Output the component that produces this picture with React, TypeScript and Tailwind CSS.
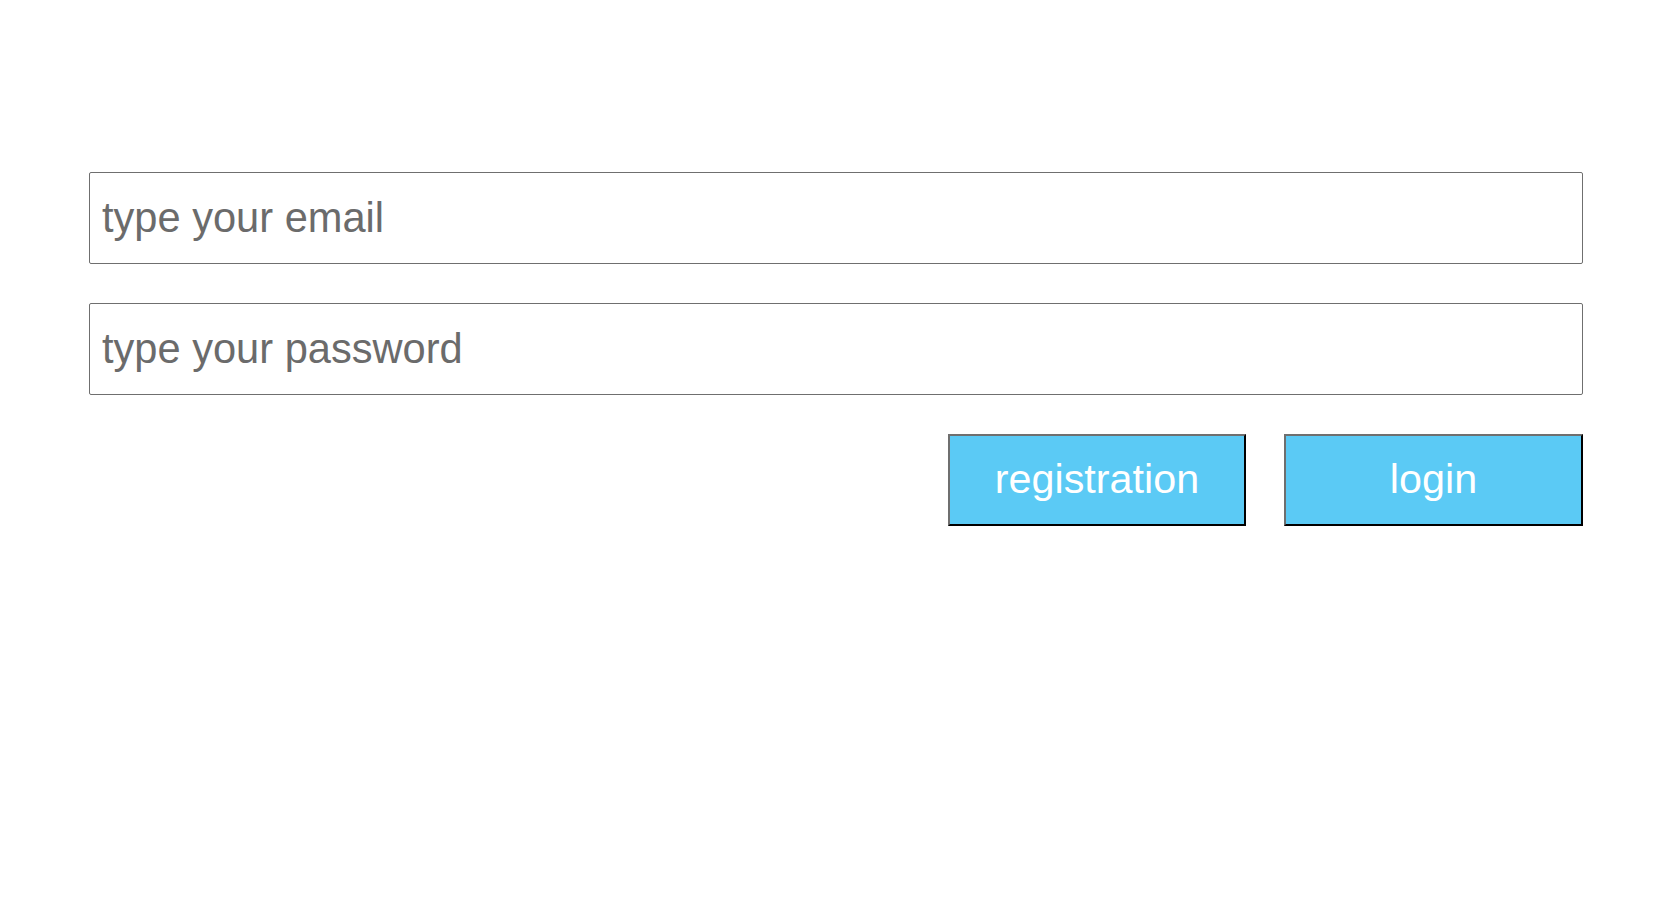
export default function App() {
  const inputCls =
    "box-border h-[92px] w-full rounded-[2px] border border-[#6f6f6f] bg-white px-[12px] font-['Liberation_Sans',Arial,sans-serif] text-[41.6px] text-[#222] outline-none placeholder:text-[#6b6b6b]";
  const buttonCls =
    "box-border h-[92px] border-2 border-t-[#6f6f6f] border-l-[#6f6f6f] border-r-black border-b-black bg-[#5bcaf5] font-['Liberation_Sans',Arial,sans-serif] text-[41.3px] text-white";
  return (
    <div className="min-h-screen w-full bg-white font-['Liberation_Sans',Arial,sans-serif]">
      <div className="ml-[89px] flex w-[1494px] flex-col gap-[39px] pt-[172px]">
        <input type="email" placeholder="type your email" className={inputCls} />
        <input type="password" placeholder="type your password" className={inputCls} />
        <div className="flex justify-end gap-[38px]">
          <button className={`${buttonCls} w-[298px]`}>registration</button>
          <button className={`${buttonCls} w-[299px]`}>login</button>
        </div>
      </div>
    </div>
  );
}
